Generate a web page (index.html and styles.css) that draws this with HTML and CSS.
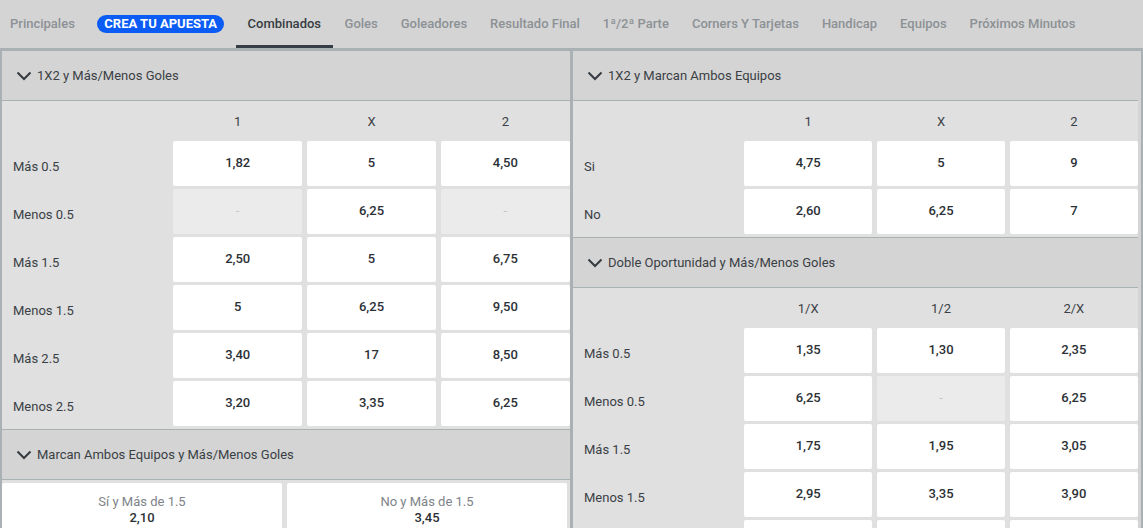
FILE: index.html
```html
<!DOCTYPE html>
<html lang="es">
<head>
<meta charset="utf-8">
<title>Combinados</title>
<link rel="stylesheet" href="styles.css">
</head>
<body>
<nav class="tabs">
  <a class="tab first">Principales</a>
  <a class="tab"><span class="badge">CREA TU APUESTA</span></a>
  <a class="tab active">Combinados</a>
  <a class="tab">Goles</a>
  <a class="tab">Goleadores</a>
  <a class="tab">Resultado Final</a>
  <a class="tab">1ª/2ª Parte</a>
  <a class="tab">Corners Y Tarjetas</a>
  <a class="tab">Handicap</a>
  <a class="tab">Equipos</a>
  <a class="tab">Próximos Minutos</a>
</nav>
<main class="content">
  <div class="col">
    <section class="market">
      <header class="mhead"><svg class="chev" viewBox="0 0 16 10" width="16" height="10"><polyline points="1.5,1.5 8,8 14.5,1.5"/></svg><span>1X2 y Más/Menos Goles</span></header>
      <div class="table">
        <div class="row head"><span></span><span>1</span><span>X</span><span>2</span></div>
        <div class="row"><span class="lbl">Más 0.5</span><span class="odd">1,82</span><span class="odd">5</span><span class="odd">4,50</span></div>
        <div class="row"><span class="lbl">Menos 0.5</span><span class="odd off">-</span><span class="odd">6,25</span><span class="odd off">-</span></div>
        <div class="row"><span class="lbl">Más 1.5</span><span class="odd">2,50</span><span class="odd">5</span><span class="odd">6,75</span></div>
        <div class="row"><span class="lbl">Menos 1.5</span><span class="odd">5</span><span class="odd">6,25</span><span class="odd">9,50</span></div>
        <div class="row"><span class="lbl">Más 2.5</span><span class="odd">3,40</span><span class="odd">17</span><span class="odd">8,50</span></div>
        <div class="row"><span class="lbl">Menos 2.5</span><span class="odd">3,20</span><span class="odd">3,35</span><span class="odd">6,25</span></div>
      </div>
    </section>
    <section class="market next">
      <header class="mhead"><svg class="chev" viewBox="0 0 16 10" width="16" height="10"><polyline points="1.5,1.5 8,8 14.5,1.5"/></svg><span>Marcan Ambos Equipos y Más/Menos Goles</span></header>
      <div class="pairs">
        <div class="pair"><span class="plbl">Sí y Más de 1.5</span><span class="pval">2,10</span></div>
        <div class="pair"><span class="plbl">No y Más de 1.5</span><span class="pval">3,45</span></div>
      </div>
    </section>
  </div>
  <div class="col right">
    <section class="market">
      <header class="mhead"><svg class="chev" viewBox="0 0 16 10" width="16" height="10"><polyline points="1.5,1.5 8,8 14.5,1.5"/></svg><span>1X2 y Marcan Ambos Equipos</span></header>
      <div class="table">
        <div class="row head"><span></span><span>1</span><span>X</span><span>2</span></div>
        <div class="row"><span class="lbl">Si</span><span class="odd">4,75</span><span class="odd">5</span><span class="odd">9</span></div>
        <div class="row"><span class="lbl">No</span><span class="odd">2,60</span><span class="odd">6,25</span><span class="odd">7</span></div>
      </div>
    </section>
    <section class="market next">
      <header class="mhead"><svg class="chev" viewBox="0 0 16 10" width="16" height="10"><polyline points="1.5,1.5 8,8 14.5,1.5"/></svg><span>Doble Oportunidad y Más/Menos Goles</span></header>
      <div class="table">
        <div class="row head"><span></span><span>1/X</span><span>1/2</span><span>2/X</span></div>
        <div class="row"><span class="lbl">Más 0.5</span><span class="odd">1,35</span><span class="odd">1,30</span><span class="odd">2,35</span></div>
        <div class="row"><span class="lbl">Menos 0.5</span><span class="odd">6,25</span><span class="odd off">-</span><span class="odd">6,25</span></div>
        <div class="row"><span class="lbl">Más 1.5</span><span class="odd">1,75</span><span class="odd">1,95</span><span class="odd">3,05</span></div>
        <div class="row"><span class="lbl">Menos 1.5</span><span class="odd">2,95</span><span class="odd">3,35</span><span class="odd">3,90</span></div>
        <div class="row"><span class="lbl"></span><span class="odd"></span><span class="odd"></span><span class="odd"></span></div>
      </div>
    </section>
  </div>
</main>
</body>
</html>
```
FILE: styles.css
```css
* { box-sizing: border-box; }
html, body { margin: 0; height: 100%; overflow: hidden; }
body {
  background: #d4d4d4;
  font-family: Roboto, "Liberation Sans", Arial, sans-serif;
  font-size: 13px;
  color: #33383d;
}
.tabs {
  display: flex;
  height: 48px;
  align-items: stretch;
  background: #d4d4d4;
}
.tab {
  display: flex;
  align-items: center;
  padding: 2px 11.5px 0;
  font-weight: 500;
  font-size: 13px;
  color: #8c9195;
  border-bottom: 3px solid transparent;
  white-space: nowrap;
}
.tab.first { padding-left: 10px; padding-right: 11px; }
.tab.active {
  color: #363c42;
  border-bottom-color: #343d46;
  padding-left: 12px;
  padding-right: 12px;
}
.badge {
  display: inline-flex;
  align-items: center;
  height: 18px;
  padding: 0 7px;
  border-radius: 9px;
  background: #0b5cf4;
  color: #fff;
  font-weight: 700;
  font-size: 13px;
}
.content {
  display: flex;
  border-top: 3px solid #aab1b4;
  border-left: 2px solid #aab1b4;
  border-right: 2px solid #aab1b4;
  height: calc(100% - 48px);
}
.col {
  width: 568px;
  flex: none;
}
.col.right {
  border-left: 3px solid #aab1b4;
}
.market.next {
  border-top: 1px solid #aab1b4;
}
.mhead {
  display: flex;
  align-items: center;
  height: 50px;
  padding-left: 14px;
  background: #d4d4d4;
  border-bottom: 1px solid #aab1b4;
  color: #3a3f45;
  font-size: 13px;
}
.chev {
  margin-right: 5px;
  fill: none;
  stroke: #353b41;
  stroke-width: 2;
}
.table {
  background: #e0e0e0;
  display: flex;
  flex-direction: column;
  gap: 3px;
  padding-bottom: 3px;
}
.row {
  display: grid;
  grid-template-columns: 166.5px 1fr 1fr 1fr;
  column-gap: 4.5px;
  height: 45px;
}
.row.head {
  height: 40px;
  margin-bottom: -3px;
  align-items: center;
  text-align: center;
  color: #3a3f45;
  font-size: 13px;
  padding-top: 1px;
}
.lbl {
  display: flex;
  align-items: center;
  padding-left: 11px;
  padding-top: 5px;
  color: #3a3f45;
}
.odd {
  display: flex;
  align-items: center;
  justify-content: center;
  background: #fff;
  border-radius: 2px;
  font-weight: 500;
  color: #2c3136;
  padding-bottom: 2px;
}
.odd.off {
  background: #ebebeb;
  color: #c4c4c4;
  font-weight: 400;
}
.pairs {
  display: grid;
  grid-template-columns: 280px 280px;
  column-gap: 5px;
  padding-top: 3px;
  background: #e0e0e0;
  height: 100px;
}
.pair {
  background: #fff;
  border-radius: 2px;
  display: flex;
  flex-direction: column;
  align-items: center;
  padding-top: 11px;
  line-height: 16px;
}
.plbl { color: #7e8388; }
.pval { font-weight: 500; color: #2c3136; }
```
